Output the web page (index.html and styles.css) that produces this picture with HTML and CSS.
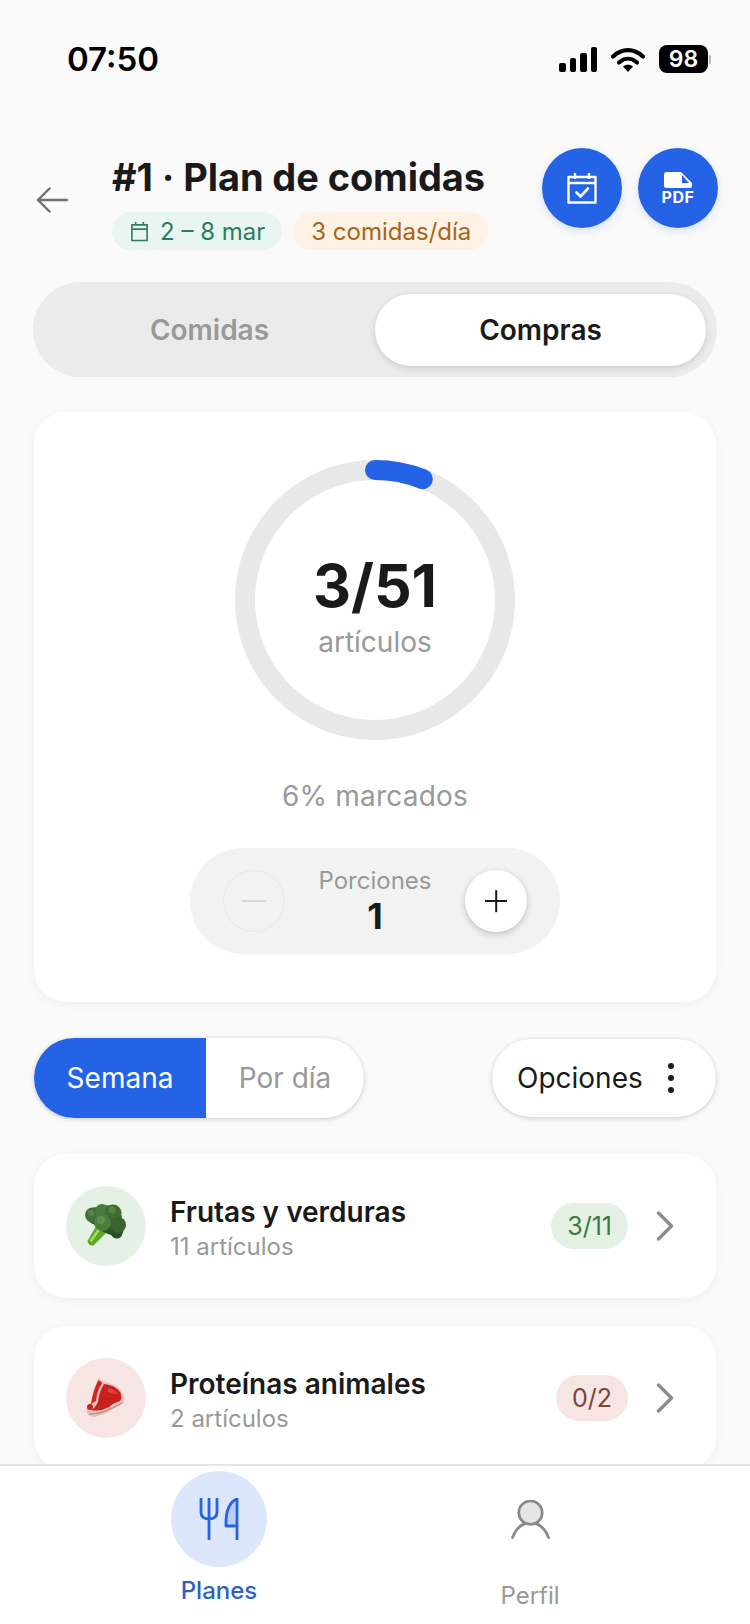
FILE: index.html
```html
<!DOCTYPE html>
<html lang="es">
<head>
    <meta charset="UTF-8">
    <meta name="viewport" content="width=device-width, initial-scale=1.0">
    <title>Plan de comidas</title>
    <link rel="stylesheet" href="styles.css">
</head>
<body>
<div class="screen">
    <div class="status">
        <span class="time">07:50</span>
        <div class="status-icons">
            <div class="signal"><i class="b1"></i><i class="b2"></i><i class="b3"></i><i class="b4"></i></div>
            <svg class="wifi" viewBox="0 0 34 25" width="34" height="25">
                <path d="M2 9.5 C11 1 23 1 32 9.5" fill="none" stroke="#000" stroke-width="4.2" stroke-linecap="round"/>
                <path d="M8 15.5 C13.5 10.5 20.5 10.5 26 15.5" fill="none" stroke="#000" stroke-width="4.2" stroke-linecap="round"/>
                <path d="M12 19.5 C15 17 19 17 22 19.5 L17 25 Z" fill="#000"/>
            </svg>
            <div class="battery"><span class="battery-level">98</span><i class="battery-tip"></i></div>
        </div>
    </div>

    <div class="content">
        <header class="header">
            <svg class="back" viewBox="0 0 32 26" width="32" height="26">
                <path d="M31 13 H2 M13.5 1.5 L2 13 L13.5 24.5" fill="none" stroke="#707070" stroke-width="2.4" stroke-linecap="round" stroke-linejoin="round"/>
            </svg>
            <div class="heading">
                <h1 class="title">#1 · Plan de comidas</h1>
                <div class="chips">
                    <span class="chip chip-green">
                        <svg viewBox="0 0 20 22" width="19" height="21">
                            <path d="M2 4 H18 V20.5 H2 Z M2 8.5 H18 M6 1 V4 M14 1 V4" fill="none" stroke="#2a7d62" stroke-width="1.7"/>
                        </svg>
                        2 – 8 mar
                    </span>
                    <span class="chip chip-orange">3 comidas/día</span>
                </div>
            </div>
            <div class="actions">
                <button class="round-btn">
                    <svg viewBox="0 0 30 32" width="30" height="32">
                        <path d="M1.5 5 H28.5 V30.5 H1.5 Z M1.5 11 H28.5 M8 1 V7 M22 1 V7" fill="none" stroke="#fff" stroke-width="2.4" stroke-linejoin="round"/>
                        <path d="M9.5 20.5 L13.5 24.5 L21 16.5" fill="none" stroke="#fff" stroke-width="2.6" stroke-linecap="round" stroke-linejoin="round"/>
                    </svg>
                </button>
                <button class="round-btn round-pdf">
                    <svg viewBox="0 0 28 16" width="28" height="16">
                        <path d="M2.5 0 H17 L28 11 V13.5 Q28 16 25.5 16 H2.5 Q0 16 0 13.5 V2.5 Q0 0 2.5 0 Z" fill="#fff"/>
                        <path d="M18 3 L25 11 H18 Z" fill="#2563e6"/>
                    </svg>
                    <span class="pdf-label">PDF</span>
                </button>
            </div>
        </header>

        <div class="segment">
            <span class="segment-item">Comidas</span>
            <span class="segment-item active">Compras</span>
        </div>

        <section class="card summary">
            <div class="ring">
                <svg viewBox="0 0 280 280" width="280" height="280">
                    <circle cx="140" cy="140" r="130" fill="none" stroke="#e8e8e8" stroke-width="20"/>
                    <circle class="ring-bar" cx="140" cy="140" r="130" fill="none" stroke="#2563e6" stroke-width="20" stroke-linecap="round" stroke-dasharray="49 768"/>
                </svg>
                <div class="ring-text">
                    <span class="ring-count">3/51</span>
                    <span class="ring-label">artículos</span>
                </div>
            </div>
            <p class="percent">6% marcados</p>
            <div class="portions">
                <button class="step step-off"><i class="step-minus"></i></button>
                <div class="portions-text">
                    <span class="portions-label">Porciones</span>
                    <span class="portions-value">1</span>
                </div>
                <button class="step"><i class="step-plus"></i></button>
            </div>
        </section>

        <div class="filters">
            <div class="toggle">
                <span class="toggle-item on">Semana</span>
                <span class="toggle-item">Por día</span>
            </div>
            <button class="options">Opciones <span class="dots"><i></i><i></i><i></i></span></button>
        </div>

        <div class="row">
            <div class="row-icon icon-green">
                <svg viewBox="0 0 44 44" width="44" height="44">
                    <path d="M3.5 37 L12 22 L22 29 L9.5 41.5 Q4.5 42 3.5 37 Z" fill="#5da82a"/>
                    <path d="M6.5 37.5 L14.5 26" stroke="#a8dc5e" stroke-width="2.4" fill="none"/>
                    <path d="M3 11 Q5 3 14 3 Q24 -1 33 4 Q38 9 38 15 Q43 24 36 33 Q30 36 27 31 Q16 28 12 21 Q3 19 3 11 Z" fill="#2f5527"/>
                    <circle cx="8.5" cy="11" r="7.5" fill="#41703a"/>
                    <circle cx="18" cy="7" r="7" fill="#4a7a3e"/>
                    <circle cx="29" cy="9" r="8.5" fill="#3e6c33"/>
                    <circle cx="33" cy="29" r="5.5" fill="#2c5026"/>
                    <circle cx="34" cy="21" r="8" fill="#38642f"/>
                    <circle cx="18.5" cy="18.5" r="8.500" fill="#4c7d3f"/>
                    <circle cx="17" cy="16" r="4" fill="#5e8f4c"/>
                    <circle cx="28" cy="6" r="3.5" fill="#55843f"/>
                    <circle cx="7" cy="9" r="3" fill="#568648"/>
                </svg>
            </div>
            <div class="row-text">
                <span class="row-title">Frutas y verduras</span>
                <span class="row-sub">11 artículos</span>
            </div>
            <span class="badge badge-green">3/11</span>
            <svg class="chevron" viewBox="0 0 18 30" width="18" height="30">
                <path d="M2.5 2 L15.5 15 L2.5 28" fill="none" stroke="#8c8c8c" stroke-width="3.4" stroke-linecap="round" stroke-linejoin="round"/>
            </svg>
        </div>

        <div class="row">
            <div class="row-icon icon-red">
                <svg viewBox="0 0 44 44" width="44" height="44">
                    <path d="M14.3 2.3 L21 6 Q32 8 38 16 Q42 22 39.5 27 Q36 30 31 32 Q20 39 10 41 Q3 40.5 2.5 34 Q3 29 7 26 Q9 14 14.3 2.3 Z" fill="#e3c0ba"/>
                    <path d="M5 38 Q16 38 24 34 Q31 31 38 27" fill="none" stroke="#c4928a" stroke-width="1.4"/>
                    <path d="M20 8 Q31 9 36 16 Q39 21 36 25 Q29 27 25 31 Q16 36 7 34 Q12 31 14 26 Q15 16 20 8 Z" fill="#c8201c"/>
                    <path d="M14.5 4 L18.5 7 Q13 14 12 25 L7 28 Q9 14 14.5 4 Z" fill="#cf2620"/>
                    <circle cx="6" cy="31" r="3" fill="#c8201c"/>
                    <path d="M24 12 Q31 13 34 18 Q29 18.5 24 16 Z" fill="#e0443a"/>
                </svg>
            </div>
            <div class="row-text">
                <span class="row-title">Proteínas animales</span>
                <span class="row-sub">2 artículos</span>
            </div>
            <span class="badge badge-red">0/2</span>
            <svg class="chevron" viewBox="0 0 18 30" width="18" height="30">
                <path d="M2.5 2 L15.5 15 L2.5 28" fill="none" stroke="#8c8c8c" stroke-width="3.4" stroke-linecap="round" stroke-linejoin="round"/>
            </svg>
        </div>
    </div>

    <nav class="tabbar">
        <div class="tab tab-on">
            <div class="tab-bubble">
                <svg viewBox="0 0 40 42" width="40" height="42">
                    <path d="M38 1 Q28 5 27 22 V28 H38 Z" fill="#b9cdf5"/>
                    <path d="M38 41 V1 Q28 5 27 22 V28 H38" fill="none" stroke="#2563e6" stroke-width="2.8" stroke-linejoin="round" stroke-linecap="round"/>
                    <path d="M2 1 V14 Q2 21 10 21 Q18 21 18 14 V1 M10 1 V41" fill="none" stroke="#2563e6" stroke-width="2.8" stroke-linecap="round"/>
                </svg>
            </div>
            <span class="tab-label">Planes</span>
        </div>
        <div class="tab">
            <div class="tab-plain">
                <svg viewBox="0 0 40 40" width="39" height="39">
                    <circle cx="20" cy="13" r="12" fill="#e6e6e6" stroke="#8a8a8a" stroke-width="2.8"/>
                    <path d="M1.5 38.5 Q6 27 14 24.5 M38.5 38.5 Q34 27 26 24.5" fill="none" stroke="#8a8a8a" stroke-width="2.8" stroke-linecap="round"/>
                </svg>
            </div>
            <span class="tab-label">Perfil</span>
        </div>
    </nav>
</div>
</body>
</html>
```

FILE: styles.css
```css
* {
    box-sizing: border-box;
}

body {
    margin: 0;
    background-color: #fafafa;
    font-family: Inter, "Liberation Sans", sans-serif;
    color: #1a1a1a;
}

button {
    border: 0;
    padding: 0;
    font-family: inherit;
}

.screen {
    width: 750px;
    height: 1624px;
    display: flex;
    flex-direction: column;
    overflow: hidden;
}

/* status bar */
.status {
    height: 118px;
    flex: none;
    display: flex;
    align-items: center;
    justify-content: space-between;
    padding: 0 39px 0 67px;
}

.time {
    font-size: 33px;
    font-weight: 600;
    color: #000;
}

.status-icons {
    display: flex;
    align-items: center;
    gap: 14px;
}

.signal {
    display: flex;
    align-items: flex-end;
    gap: 4px;
    height: 25px;
}

.signal i {
    width: 6.5px;
    background: #000;
    border-radius: 2px;
}

.signal .b1 { height: 9px; }
.signal .b2 { height: 14px; }
.signal .b3 { height: 19px; }
.signal .b4 { height: 25px; }

.battery {
    display: flex;
    align-items: center;
    gap: 1px;
}

.battery-level {
    width: 49px;
    height: 28px;
    background: #000;
    color: #fff;
    border-radius: 8px;
    font-size: 23px;
    font-weight: 600;
    line-height: 28px;
    text-align: center;
}

.battery-tip {
    width: 2px;
    height: 9px;
    background: #b5b5b5;
    border-radius: 0 2px 2px 0;
}

/* page */
.content {
    flex: 1;
    min-height: 0;
    overflow: hidden;
    padding-top: 30px;
}

.header {
    display: flex;
    align-items: center;
    height: 103px;
    padding: 0 32px 0 36px;
}

.back {
    flex: none;
    margin-right: 44px;
}

.heading {
    flex: 1;
    align-self: flex-start;
    padding-top: 7px;
}

.title {
    margin: 0;
    font-size: 38px;
    line-height: 44px;
    font-weight: 700;
    letter-spacing: -0.1px;
    white-space: nowrap;
}

.chips {
    display: flex;
    gap: 11px;
    margin-top: 13px;
}

.chip {
    height: 38px;
    display: flex;
    align-items: center;
    gap: 11px;
    padding: 0 17px 0 18px;
    border-radius: 19px;
    font-size: 24px;
}

.chip-green {
    background: #e9f5f0;
    color: #2a7d62;
}

.chip-orange {
    background: #fdf2e3;
    color: #a5661a;
}

.actions {
    display: flex;
    gap: 16px;
    align-self: flex-start;
}

.round-btn {
    width: 80px;
    height: 80px;
    border-radius: 50%;
    background: #2563e6;
    box-shadow: 0 3px 8px rgba(37, 99, 230, 0.18);
    display: flex;
    flex-direction: column;
    align-items: center;
    justify-content: center;
}

.pdf-label {
    color: #fff;
    font-size: 16px;
    font-weight: 700;
    line-height: 15px;
    margin-top: 2px;
    letter-spacing: 0.5px;
}

.segment {
    margin: 31px 33px 0;
    height: 95px;
    padding: 12px 11px 11px;
    background: #ebebeb;
    border-radius: 48px;
    display: flex;
}

.segment-item {
    flex: 1;
    display: flex;
    align-items: center;
    justify-content: center;
    font-size: 28px;
    font-weight: 600;
    color: #999;
}

.segment-item.active {
    background: #fff;
    color: #1a1a1a;
    border-radius: 36px;
    box-shadow: 0 2px 6px rgba(0, 0, 0, 0.14);
}

.card {
    background: #fff;
    border-radius: 32px;
    box-shadow: 0 2px 10px rgba(0, 0, 0, 0.05);
}

.summary {
    margin: 35px 34px 0;
    height: 590px;
    padding-top: 48px;
    display: flex;
    flex-direction: column;
    align-items: center;
}

.ring {
    position: relative;
    width: 280px;
    height: 280px;
}

.ring svg {
    display: block;
}

.ring-bar {
    transform: rotate(-90deg);
    transform-origin: 140px 140px;
}

.ring-text {
    position: absolute;
    inset: 0;
    display: flex;
    flex-direction: column;
    align-items: center;
    padding-top: 90px;
}

.ring-count {
    font-size: 59px;
    line-height: 72px;
    font-weight: 700;
}

.ring-label {
    margin-top: 3px;
    font-size: 28px;
    line-height: 34px;
    color: #999;
}

.percent {
    margin: 38px 0 0;
    font-size: 28px;
    line-height: 36px;
    color: #999;
    letter-spacing: 0.2px;
}

.portions {
    margin-top: 34px;
    width: 370px;
    height: 106px;
    border-radius: 53px;
    background: #f2f2f2;
    display: flex;
    align-items: center;
    justify-content: space-between;
    padding: 0 33px;
}

.portions-text {
    display: flex;
    flex-direction: column;
    align-items: center;
}

.portions-label {
    font-size: 24px;
    line-height: 30px;
    color: #999;
}

.portions-value {
    font-size: 36px;
    line-height: 40px;
    font-weight: 700;
}

.step {
    width: 62px;
    height: 62px;
    border-radius: 50%;
    background: #fff;
    box-shadow: 0 2px 6px rgba(0, 0, 0, 0.22);
    display: flex;
    align-items: center;
    justify-content: center;
}

.step-off {
    background: transparent;
    box-shadow: none;
    border: 1.5px solid #e8e8e8;
}

.step-minus {
    width: 24px;
    height: 2px;
    background: #d8d8d8;
}

.step-plus,
.step-plus::after {
    display: block;
    width: 22px;
    height: 2.4px;
    background: #1a1a1a;
}

.step-plus::after {
    content: "";
    transform: rotate(90deg);
}

.filters {
    margin: 36px 34px 0;
    height: 80px;
    display: flex;
    align-items: center;
    justify-content: space-between;
}

.toggle {
    width: 330px;
    height: 80px;
    border-radius: 40px;
    background: #fff;
    overflow: hidden;
    display: flex;
    box-shadow: 0 1px 5px rgba(0, 0, 0, 0.2);
}

.toggle-item {
    flex: 1;
    display: flex;
    align-items: center;
    justify-content: center;
    font-size: 28px;
    color: #999;
}

.toggle-item.on {
    flex: none;
    width: 172px;
    background: #2563e6;
    color: #fff;
}

.options {
    width: 224px;
    height: 78px;
    border-radius: 39px;
    background: #fff;
    box-shadow: 0 1px 5px rgba(0, 0, 0, 0.2);
    font-size: 28px;
    color: #1a1a1a;
    display: flex;
    align-items: center;
    gap: 25px;
    padding-left: 25px;
}

.dots {
    display: flex;
    flex-direction: column;
    gap: 6px;
}

.dots i {
    width: 6px;
    height: 6px;
    border-radius: 50%;
    background: #1a1a1a;
}

.row {
    margin: 28px 34px 0;
    height: 144px;
    flex: none;
    background: #fff;
    border-radius: 32px;
    box-shadow: 0 2px 10px rgba(0, 0, 0, 0.05);
    display: flex;
    align-items: center;
    padding: 0 42px 0 32px;
}

.filters + .row {
    margin-top: 36px;
}

.row-icon {
    width: 80px;
    height: 80px;
    border-radius: 50%;
    flex: none;
    display: flex;
    align-items: center;
    justify-content: center;
}

.icon-green { background: #e5f1e4; }
.icon-red { background: #f6e5e2; }

.row-text {
    flex: 1;
    margin-left: 24px;
    padding-top: 4px;
    display: flex;
    flex-direction: column;
    gap: 3px;
}

.row-title {
    font-size: 28px;
    line-height: 34px;
    font-weight: 600;
}

.row-sub {
    font-size: 24px;
    line-height: 30px;
    color: #999;
}

.badge {
    height: 46px;
    padding: 0 16px;
    border-radius: 23px;
    font-size: 25px;
    line-height: 46px;
}

.badge-green {
    background: #e5f1e4;
    color: #3c7a3e;
}

.badge-red {
    background: #f6e5e2;
    color: #7d4438;
}

.chevron {
    flex: none;
    margin-left: 28px;
}

/* bottom tabs */
.tabbar {
    height: 160px;
    flex: none;
    background: #fff;
    border-top: 2px solid #e6e6e6;
    display: flex;
    padding: 5px 145px 0 171px;
    justify-content: space-between;
}

.tab {
    display: flex;
    flex-direction: column;
    align-items: center;
}

.tab-bubble {
    width: 96px;
    height: 96px;
    border-radius: 50%;
    background: #dce7fb;
    display: flex;
    align-items: center;
    justify-content: center;
}

.tab-plain {
    width: 150px;
    height: 96px;
    display: flex;
    align-items: center;
    justify-content: center;
}

.tab-label {
    margin-top: 9px;
    font-size: 24px;
    line-height: 30px;
    color: #999;
}

.tab-on .tab-label {
    color: #2f5fc4;
    font-weight: 500;
}

.tab-plain + .tab-label {
    margin-top: 14px;
}
```
